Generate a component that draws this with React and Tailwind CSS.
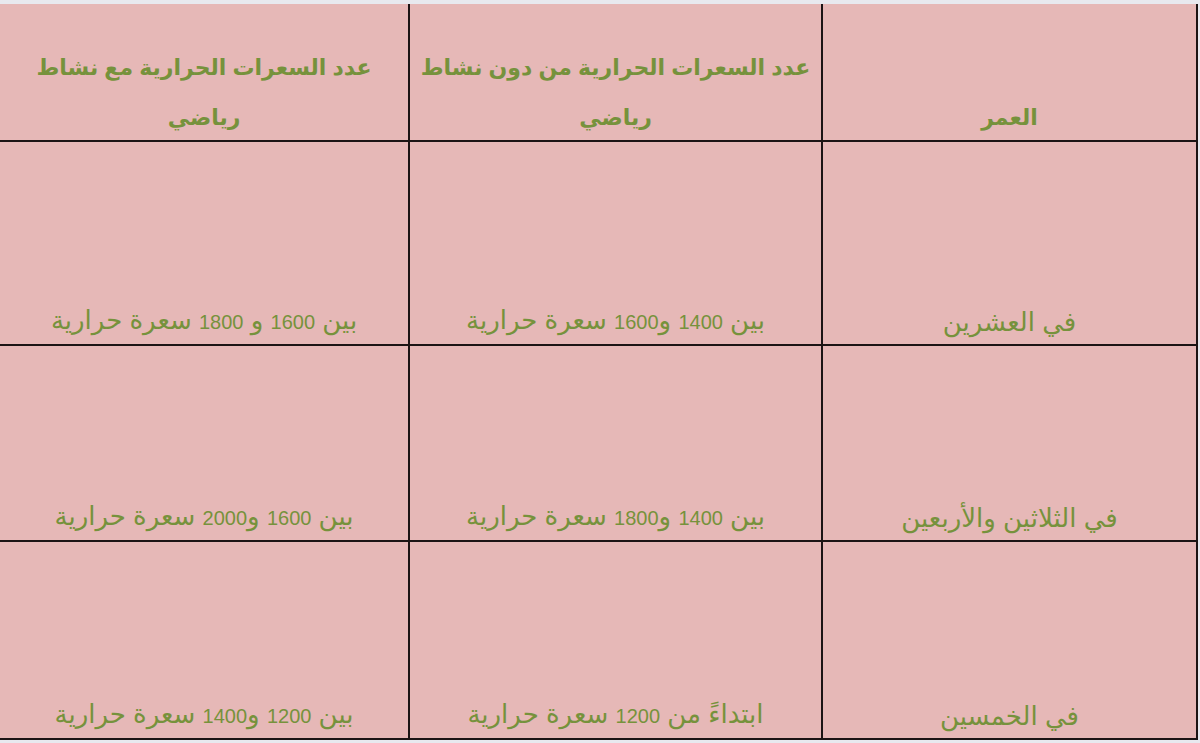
const rows = [
  {
    h: "h-[204px]",
    cells: ["بين 1600 و 1800 سعرة حرارية", "بين 1400 و1600 سعرة حرارية", "في العشرين"],
  },
  {
    h: "h-[196px]",
    cells: ["بين 1600 و2000 سعرة حرارية", "بين 1400 و1800 سعرة حرارية", "في الثلاثين والأربعين"],
  },
  {
    h: "h-[198px]",
    cells: ["بين 1200 و1400 سعرة حرارية", "ابتداءً من 1200 سعرة حرارية", "في الخمسين"],
  },
];

const widths = ["w-[410px]", "w-[413px]", "w-[375px]"];

// digits are rendered smaller than the arabic letters, like in the source sheet
function CellText({ text }) {
  return text.split(/(\d+)/).map((part, k) =>
    /^\d+$/.test(part) ? (
      <span key={k} className="text-[20px]">
        {part}
      </span>
    ) : (
      <span key={k}>{part}</span>
    )
  );
}

export default function App() {
  return (
    <div className="w-[1200px] h-[743px] overflow-hidden bg-[#e8e9ef] pt-[4px] font-['Liberation_Sans','DejaVu_Sans',sans-serif] text-[#76923c]">
      <div className="w-[1198px] bg-[#e6b8b7]">
        {/* header */}
        <div className="flex h-[138px] border-b-2 border-[#1c1414]">
          <div className={`${widths[0]} border-r-2 border-[#1c1414] flex items-end justify-center`}>
            <p dir="rtl" className="-mb-[3px] text-center text-[22px] font-bold leading-[50px]">
              عدد السعرات الحرارية مع نشاط
              <br />
              رياضي
            </p>
          </div>
          <div className={`${widths[1]} border-r-2 border-[#1c1414] flex items-end justify-center`}>
            <p dir="rtl" className="-mb-[3px] text-center text-[22px] font-bold leading-[50px]">
              عدد السعرات الحرارية من دون نشاط
              <br />
              رياضي
            </p>
          </div>
          <div className={`${widths[2]} border-r-2 border-[#1c1414] flex items-end justify-center`}>
            <p dir="rtl" className="-mb-[3px] text-center text-[22px] font-bold leading-[50px]">
              العمر
            </p>
          </div>
        </div>

        {rows.map((row, i) => (
          <div key={i} className={`flex ${row.h} border-b-2 border-[#1c1414]`}>
            {row.cells.map((txt, j) => (
              <div
                key={j}
                className={`${widths[j]} border-r-2 border-[#1c1414] flex items-end justify-center pb-[6px]`}
              >
                <p dir="rtl" className="text-center text-[26px] leading-[32px]">
                  <CellText text={txt} />
                </p>
              </div>
            ))}
          </div>
        ))}
      </div>
    </div>
  );
}
